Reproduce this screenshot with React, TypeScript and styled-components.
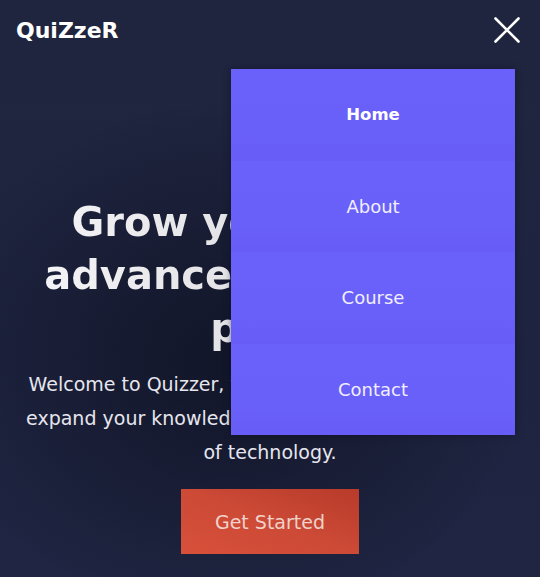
import React from "react";
import styled, { createGlobalStyle } from "styled-components";

const Global = createGlobalStyle`
  html, body { margin: 0; padding: 0; }
  body {
    font-family: "DejaVu Sans", "Noto Sans", sans-serif;
    background: #1f2440;
  }
  * { box-sizing: border-box; }
`;

const Page = styled.div`
  position: relative;
  width: 540px;
  height: 577px;
  overflow: hidden;
  background:
    radial-gradient(ellipse 300px 260px at 230px 360px, rgba(14, 17, 32, 0.75) 0%, rgba(14, 17, 32, 0) 100%),
    linear-gradient(180deg, #20253f 0%, #1e2340 60%, #1f2542 100%);
  color: #fff;
`;

const Header = styled.header`
  display: flex;
  align-items: center;
  justify-content: space-between;
  height: 60px;
  padding: 0 20px 0 16px;
`;

const Logo = styled.div`
  font-size: 22px;
  font-weight: 700;
  color: #fff;
`;

const CloseButton = styled.button`
  display: flex;
  background: none;
  border: none;
  padding: 0;
  cursor: pointer;
`;

const Hero = styled.section`
  display: flex;
  flex-direction: column;
  align-items: center;
  text-align: center;
  padding-top: 136px;
`;

const Title = styled.h1`
  margin: 0;
  font-size: 40px;
  font-weight: 700;
  line-height: 53px;
  white-space: nowrap;
  background: linear-gradient(90deg, #f4f4f6 0%, #e2e2e6 45%, #b9b9c0 100%);
  -webkit-background-clip: text;
  background-clip: text;
  color: transparent;
`;

const Lead = styled.p`
  margin: 12px 0 0;
  font-size: 19px;
  font-weight: 400;
  line-height: 34px;
  white-space: nowrap;
  color: #e6e6ee;
`;

const CTA = styled.button`
  margin-top: 20px;
  width: 178px;
  height: 65px;
  border: none;
  background: linear-gradient(200deg, #b83a2a 0%, #cc4a36 50%, #d8503a 100%);
  color: #efd2ca;
  font-family: inherit;
  font-size: 19px;
  font-weight: 400;
  cursor: pointer;
`;

const Menu = styled.nav`
  position: absolute;
  left: 231px;
  top: 69px;
  width: 284px;
  height: 366px;
  display: grid;
  grid-template-rows: repeat(4, 1fr);
  background: #6a60fa;
  box-shadow: 0 0 6px rgba(10, 12, 30, 0.5);
`;

const MenuItem = styled.a<{ $active?: boolean }>`
  display: flex;
  align-items: center;
  justify-content: center;
  font-size: ${(p) => (p.$active ? "16.5px" : "18px")};
  font-weight: ${(p) => (p.$active ? 700 : 400)};
  color: ${(p) => (p.$active ? "#ffffff" : "#f1efff")};
  text-decoration: none;
  background: linear-gradient(180deg, #6a60fa 0%, #6960f9 70%, #675df6 100%);
`;

const items = ["Home", "About", "Course", "Contact"];

export default function App() {
  return (
    <>
      <Global />
      <Page>
        <Header>
          <Logo>QuiZzeR</Logo>
          <CloseButton aria-label="Close menu">
            <svg width="26" height="26" viewBox="0 0 26 26">
              <path d="M1.5 1.5 L24.5 24.5 M24.5 1.5 L1.5 24.5" stroke="#ffffff" strokeWidth="2.6" strokeLinecap="round" />
            </svg>
          </CloseButton>
        </Header>
        <Hero>
          <Title>
            Grow your coding
            <br />
            advanced quiz tests
            <br />
            prep.
          </Title>
          <Lead>
            Welcome to Quizzer, the best place where you can
            <br />
            expand your knowledge and grow in the vast world
            <br />
            of technology.
          </Lead>
          <CTA>Get Started</CTA>
        </Hero>
        <Menu>
          {items.map((label, i) => (
            <MenuItem key={label} href="#" $active={i === 0}>
              {label}
            </MenuItem>
          ))}
        </Menu>
      </Page>
    </>
  );
}
